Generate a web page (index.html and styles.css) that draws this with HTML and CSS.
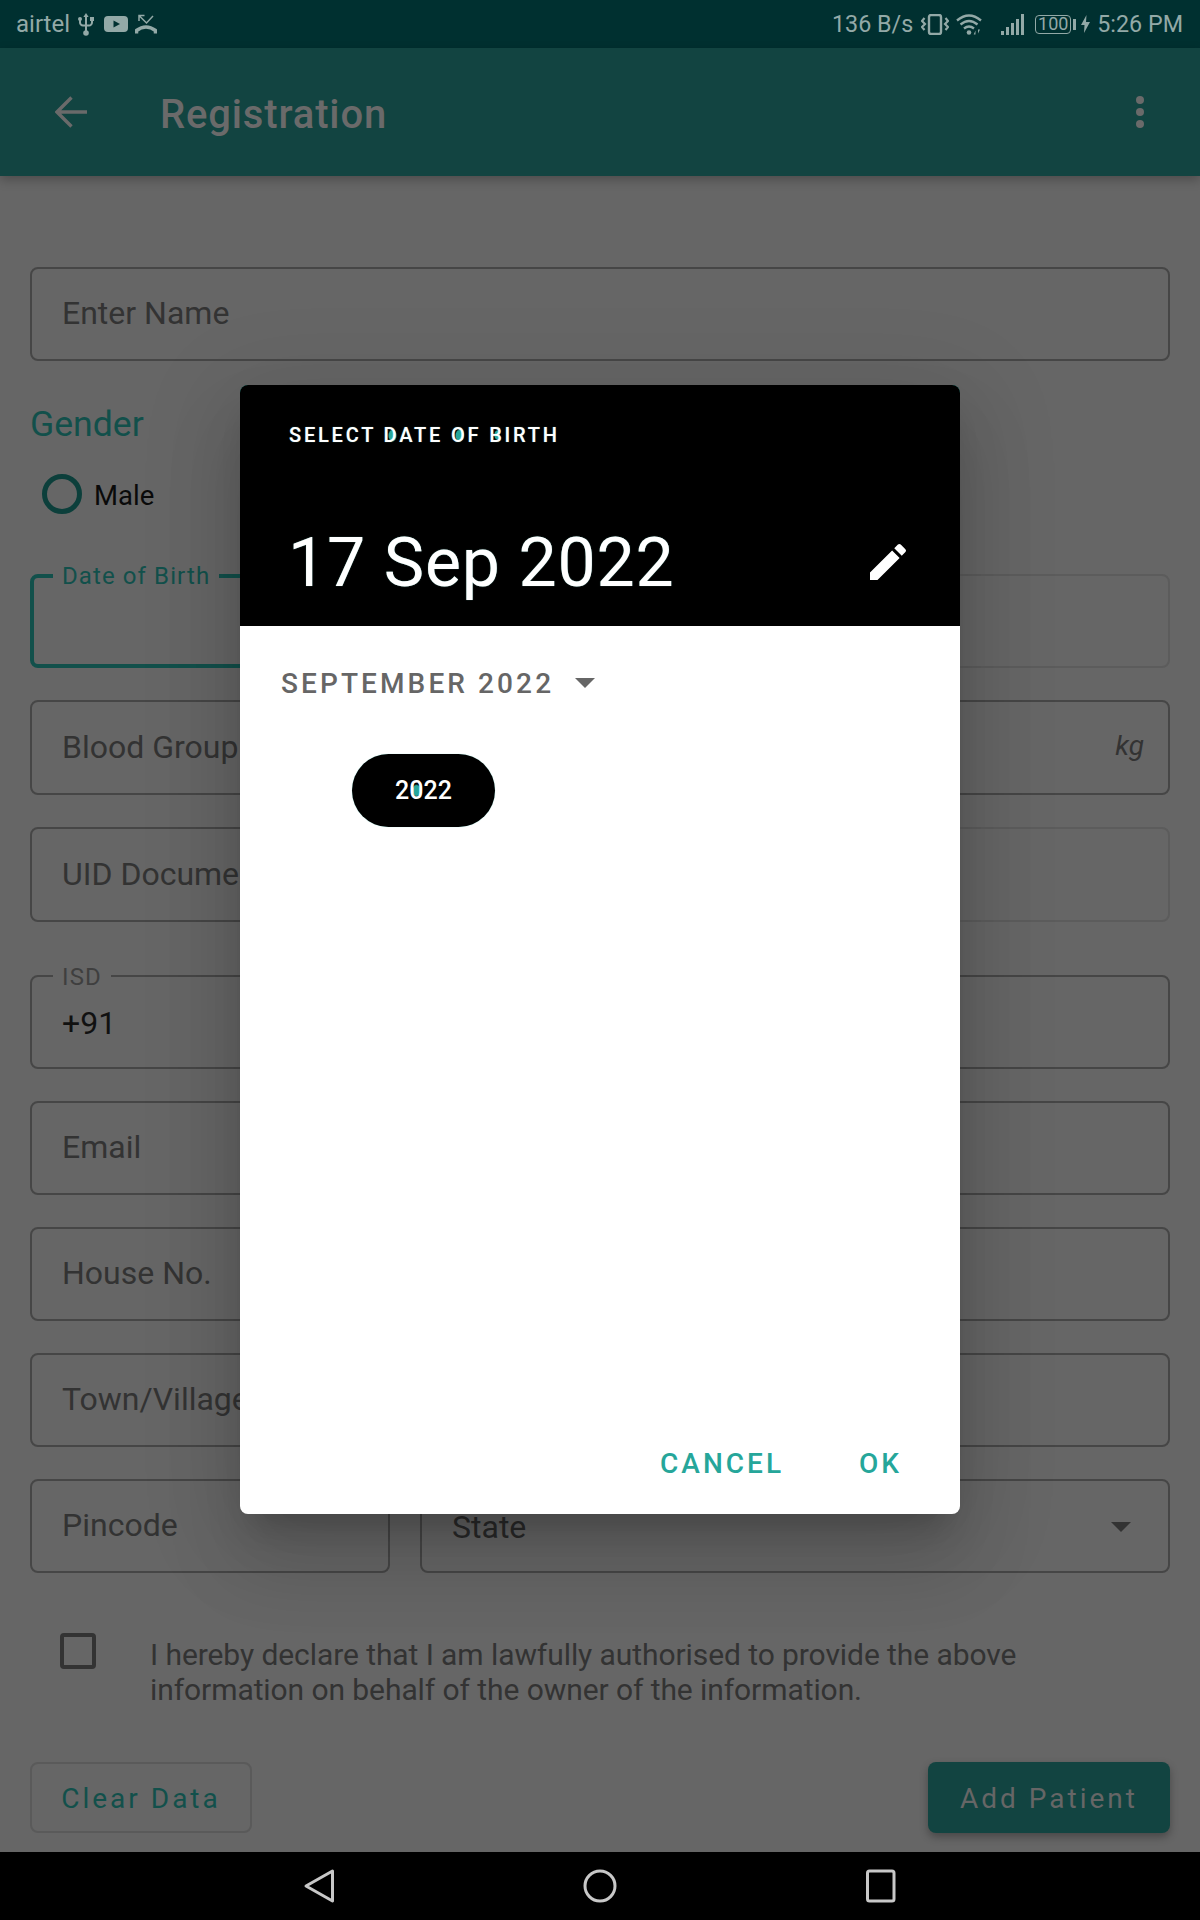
FILE: index.html
```html
<!DOCTYPE html>
<html lang="en">
<head>
    <meta charset="UTF-8">
    <meta name="viewport" content="width=device-width, initial-scale=1.0">
    <title>Registration</title>
    <link rel="stylesheet" href="styles.css">
</head>
<body>

<div class="screen">

    <div class="status-bar">
        <div class="status-left">
            <span class="carrier">airtel</span>
            <svg class="icon-usb" width="16" height="23" viewBox="0 0 16 23"><path d="M8 0l2.6 4H5.4z"/><path d="M8 3v17M2 7v2.5a3 3 0 0 0 3 3h6a3 3 0 0 0 3-3V7" fill="none" stroke="#93a9a7" stroke-width="2"/><circle cx="8" cy="20" r="2.8"/><circle cx="2" cy="6" r="2"/><rect x="12" y="4" width="4" height="4"/></svg>
            <svg class="icon-yt" width="24" height="16" viewBox="0 0 24 16"><rect width="24" height="16" rx="4"/><path d="M9.5 4.5l6.5 3.5-6.5 3.5z" fill="#003030"/></svg>
            <svg class="icon-missed" width="22" height="20" viewBox="0 0 22 20"><path d="M4 7V1.500h5.500M4 1.500l7.500 7.500L18 2" fill="none" stroke="#93a9a7" stroke-width="1.500"/><path d="M1.500 19.500v-3q9.500-7 19 0v3" fill="none" stroke="#93a9a7" stroke-width="3.500"/></svg>
        </div>
        <div class="status-right">
            <span class="speed">136 B/s</span>
            <svg class="icon-vibrate" width="28" height="21" viewBox="0 0 28 21"><rect x="8" y="1" width="12" height="19" rx="2" fill="none" stroke="#93a9a7" stroke-width="2.400"/><path d="M3.500 4L1 7l3 3-3 3 2.500 3M24.500 4L27 7l-3 3 3 3-2.500 3" fill="none" stroke="#93a9a7" stroke-width="2.200"/></svg>
            <svg class="icon-wifi" width="26" height="21" viewBox="0 0 26 21"><path d="M1 6.500q12-10 24 0M4.500 10.500q8.500-7 17 0M8 14.500q5-4 10 0" fill="none" stroke="#93a9a7" stroke-width="2.300"/><circle cx="13" cy="18.500" r="2.300"/><path d="M19.500 20.500v-4l-1.800 4zM22 15.500v4l2-4z"/></svg>
            <svg class="icon-signal" width="23" height="21" viewBox="0 0 23 21"><rect y="17" width="3" height="4"/><rect x="5" y="13" width="3" height="8"/><rect x="10" y="9" width="3" height="12"/><rect x="15" y="5" width="3" height="16"/><rect x="20" y="0" width="3" height="21"/></svg>
            <span class="battery">100</span>
            <span class="battery-nub"></span>
            <svg class="icon-bolt" width="9" height="18" viewBox="0 0 9 18"><path d="M5.500 0L0 10h3.500L3 18l6-11H5z"/></svg>
            <span class="clock">5:26 PM</span>
        </div>
    </div>

    <div class="app-bar">
        <svg class="back-icon" width="32" height="32" viewBox="0 0 32 32"><path d="M32 16H2M16.500 1.500L2 16l14.500 14.500" fill="none" stroke="#6a6a6a" stroke-width="3.400"/></svg>
        <div class="app-title">Registration</div>
        <div class="menu-dots"><span></span><span></span><span></span></div>
    </div>

    <div class="content">
        <div class="field"><span class="placeholder">Enter Name</span></div>

        <div class="section-label">Gender</div>
        <div class="radio-row">
            <span class="radio"></span>
            <span class="radio-text">Male</span>
        </div>

        <div class="form-row first">
            <div class="field focused"><span class="float-label teal">Date of Birth</span></div>
            <div class="field faint"></div>
        </div>
        <div class="form-row tall">
            <div class="field"><span class="placeholder">Blood Group</span></div>
            <div class="field end"><span class="unit">kg</span></div>
        </div>
        <div class="form-row tall">
            <div class="field"><span class="placeholder">UID Document</span></div>
            <div class="field faint"></div>
        </div>
        <div class="form-row isd">
            <div class="field"><span class="float-label">ISD</span><span class="value">+91</span></div>
            <div class="field"></div>
        </div>
        <div class="form-row">
            <div class="field"><span class="placeholder">Email</span></div>
            <div class="field"></div>
        </div>
        <div class="form-row">
            <div class="field"><span class="placeholder">House No.</span></div>
            <div class="field"></div>
        </div>
        <div class="form-row">
            <div class="field"><span class="placeholder">Town/Village</span></div>
            <div class="field"></div>
        </div>
        <div class="form-row">
            <div class="field"><span class="placeholder">Pincode</span></div>
            <div class="field select"><span class="placeholder state">State</span><span class="caret dark"></span></div>
        </div>

        <div class="declare">
            <span class="checkbox"></span>
            <p>I hereby declare that I am lawfully authorised to provide the above<br>information on behalf of the owner of the information.</p>
        </div>

        <div class="actions">
            <div class="btn-outline">Clear Data</div>
            <div class="btn-solid">Add Patient</div>
        </div>
    </div>

    <div class="nav-bar">
        <svg width="32" height="36" viewBox="0 0 32 36"><path d="M30.500 3L4 18l26.500 15z" fill="none" stroke="#c8c8c8" stroke-width="3" stroke-linejoin="round"/></svg>
        <svg width="34" height="34" viewBox="0 0 34 34"><circle cx="17" cy="17" r="15" fill="none" stroke="#c8c8c8" stroke-width="3"/></svg>
        <svg width="32" height="34" viewBox="0 0 32 34"><rect x="1.500" y="2" width="26.500" height="30" rx="2" fill="none" stroke="#c8c8c8" stroke-width="3"/></svg>
    </div>

    <div class="date-dialog">
        <div class="dialog-head">
            <div class="overline">SELECT <i class="ink d">D</i>ATE <i class="ink">O</i>F <i class="ink b">B</i>IRTH</div>
            <div class="date-row">
                <span class="big-date">17 Sep 2022</span>
                <svg width="48" height="48" viewBox="0 0 24 24"><path fill="#fff" d="M3 17.250V21h3.750L17.810 9.940l-3.750-3.750L3 17.250zM20.710 7.040a1 1 0 0 0 0-1.410l-2.340-2.340a1 1 0 0 0-1.410 0l-1.830 1.830 3.750 3.750 1.830-1.830z"/></svg>
            </div>
        </div>
        <div class="dialog-body">
            <div class="month-row">
                <span class="month">SEPTEMBER 2022</span>
                <span class="caret"></span>
            </div>
            <div class="year-pill">2<i class="ink">0</i>22</div>
        </div>
        <div class="dialog-foot">
            <span class="text-btn">CANCEL</span>
            <span class="text-btn">OK</span>
        </div>
    </div>

</div>

</body>
</html>
```

FILE: styles.css
```css
* {
    box-sizing: border-box;
}

body {
    margin: 0;
    font-family: Roboto, "Liberation Sans", sans-serif;
    background-color: #000;
}

.screen {
    position: relative;
    width: 1200px;
    height: 1920px;
    display: flex;
    flex-direction: column;
    overflow: hidden;
    background-color: #666;
}

/* status bar */
.status-bar {
    height: 48px;
    flex-shrink: 0;
    display: flex;
    justify-content: space-between;
    align-items: center;
    padding: 0 17px 0 16px;
    background-color: #003030;
    color: #93a9a7;
    font-size: 24px;
    fill: #93a9a7;
}

.status-left,
.status-right {
    display: flex;
    align-items: center;
}

.speed,
.clock {
    font-size: 23.3px;
}

.icon-usb {
    margin-left: 8px;
}

.icon-yt {
    margin-left: 10px;
}

.icon-missed {
    margin-left: 7px;
}

.icon-vibrate {
    margin-left: 8px;
}

.icon-wifi {
    margin-left: 7px;
}

.icon-signal {
    margin-left: 19px;
}

.battery {
    width: 36px;
    height: 19px;
    margin-left: 11px;
    border: 1.5px solid #93a9a7;
    border-radius: 4px;
    font-size: 18px;
    line-height: 16px;
    text-align: center;
}

.battery-nub {
    width: 3px;
    height: 11px;
    margin-left: 2px;
    background-color: #93a9a7;
}

.icon-bolt {
    margin-left: 5px;
}

.clock {
    margin-left: 7px;
}

/* app bar */
.app-bar {
    height: 128px;
    flex-shrink: 0;
    display: flex;
    align-items: center;
    padding: 0 55px;
    background-color: #124441;
    box-shadow: 0 4px 10px rgba(0, 0, 0, 0.25);
    position: relative;
}

.app-title {
    margin-left: 73px;
    padding-top: 4px;
    font-size: 40px;
    font-weight: 500;
    letter-spacing: 0.85px;
    color: #6a6a6a;
}

.menu-dots {
    margin-left: auto;
    margin-right: 1px;
    display: flex;
    flex-direction: column;
    gap: 4px;
}

.menu-dots span {
    width: 8px;
    height: 8px;
    border-radius: 50%;
    background-color: #6a6a6a;
}

/* form */
.content {
    flex: 1;
    padding: 91px 30px 0;
}

.field {
    position: relative;
    height: 94px;
    display: flex;
    align-items: center;
    padding: 0 30px 2px;
    border: 2px solid #464646;
    border-radius: 8px;
}

.field.focused {
    border: 4px solid #12504b;
}

.field.faint {
    border-color: #5c5c5c;
}

.field.end {
    justify-content: flex-end;
    padding-right: 24px;
    padding-bottom: 5px;
}

.field.select {
    justify-content: space-between;
    padding-right: 37px;
}

.placeholder {
    font-size: 32px;
    color: #333;
    white-space: nowrap;
}

.placeholder.state {
    margin-top: 4px;
    color: #2a2a2a;
}

.value {
    margin-top: 3px;
    font-size: 32px;
    color: #111;
}

.unit {
    font-size: 28px;
    font-style: italic;
    color: #333;
}

.float-label {
    position: absolute;
    top: -14px;
    left: 21px;
    padding: 0 9px;
    background-color: #666;
    font-size: 24px;
    line-height: 28px;
    letter-spacing: 1.1px;
    color: #3f3f3f;
}

.field.focused .float-label {
    left: 19px;
    top: -16px;
}

.teal {
    color: #12504b;
}

.section-label {
    margin-top: 43px;
    font-size: 35.6px;
    line-height: 40px;
    color: #12504b;
}

.radio-row {
    display: flex;
    align-items: center;
    margin: 30px 0 0 12px;
}

.radio {
    width: 40px;
    height: 40px;
    border: 5px solid #0c3f3b;
    border-radius: 50%;
}

.radio-text {
    margin-left: 12px;
    padding-top: 2px;
    font-size: 27.5px;
    color: #0a0a0a;
}

.form-row {
    display: grid;
    grid-template-columns: 360px 1fr;
    gap: 30px;
    margin-top: 32px;
}

.form-row.first {
    margin-top: 60px;
}

.form-row.tall .field {
    height: 95px;
}

.form-row.isd {
    margin-top: 53px;
}

.caret {
    width: 0;
    height: 0;
    border-left: 10px solid transparent;
    border-right: 10px solid transparent;
    border-top: 10px solid #666;
}

.caret.dark {
    margin-top: 3px;
    border-top-color: #333;
}

.declare {
    display: flex;
    margin: 60px 0 0 30px;
}

.checkbox {
    width: 36px;
    height: 36px;
    flex-shrink: 0;
    border: 4px solid #333;
    border-radius: 4px;
}

.declare p {
    margin: 4px 0 0 54px;
    font-size: 30px;
    line-height: 35px;
    letter-spacing: -0.08px;
    color: #333;
}

.actions {
    display: flex;
    justify-content: space-between;
    margin-top: 55px;
}

.btn-outline,
.btn-solid {
    height: 71px;
    display: flex;
    align-items: center;
    justify-content: center;
    padding-top: 2px;
    border-radius: 8px;
    font-size: 28px;
    letter-spacing: 3px;
}

.btn-outline {
    width: 222px;
    border: 2px solid #5a5a5a;
    color: #12504b;
}

.btn-solid {
    width: 242px;
    background-color: #124441;
    color: #666;
    box-shadow: 0 4px 8px rgba(0, 0, 0, 0.3);
}

/* nav bar */
.nav-bar {
    height: 68px;
    flex-shrink: 0;
    display: flex;
    justify-content: center;
    align-items: center;
    gap: 249px;
    background-color: #000;
}

/* date picker */
.date-dialog {
    position: absolute;
    top: 385px;
    left: 240px;
    width: 720px;
    height: 1129px;
    display: flex;
    flex-direction: column;
    border-radius: 8px;
    background: linear-gradient(#26a69a 20px, #fff 20px);
    box-shadow: 0 22px 30px -14px rgba(0, 0, 0, 0.2), 0 48px 76px 6px rgba(0, 0, 0, 0.1), 0 18px 92px 16px rgba(0, 0, 0, 0.1);
}

.dialog-head {
    height: 241px;
    padding: 38px 48px 0;
    border-radius: 8px 8px 0 0;
    background-color: #000;
    color: #fff;
    text-shadow: 0 0 1px rgba(120, 220, 210, 0.7);
}

.overline {
    margin-left: 1px;
    font-size: 20px;
    line-height: 24px;
    font-weight: 500;
    letter-spacing: 2.8px;
}

.ink {
    font-style: normal;
    background: radial-gradient(ellipse closest-side, #26a69a 75%, transparent 100%) no-repeat center / 9px 13px;
}

.ink.d {
    background-position: 4px center;
}

.ink.b {
    background-size: 6px 10px;
    background-position: 5px center;
}

.date-row {
    display: flex;
    justify-content: space-between;
    align-items: center;
    margin-top: 76px;
    height: 80px;
}

.date-row svg {
    margin-top: -2px;
}

.big-date {
    font-size: 68px;
    line-height: 80px;
    letter-spacing: 0.8px;
}

.dialog-body {
    flex: 1;
    padding: 37px 41px 0;
}

.month-row {
    display: flex;
    align-items: center;
    height: 40px;
}

.month {
    font-size: 28px;
    font-weight: 500;
    letter-spacing: 3.1px;
    color: #666;
}

.month-row .caret {
    margin-left: 21px;
}

.year-pill {
    width: 143px;
    height: 73px;
    margin: 51px 0 0 71px;
    border-radius: 37px;
    background-color: #000;
    box-shadow: 0 0 1px #8fe3da;
    color: #fff;
    font-size: 25px;
    font-weight: 500;
    line-height: 73px;
    text-align: center;
}

.dialog-foot {
    display: flex;
    justify-content: flex-end;
    gap: 75px;
    padding: 0 58px 34px 0;
}

.text-btn {
    font-size: 28px;
    font-weight: 500;
    line-height: 32px;
    letter-spacing: 3px;
    color: #26a69a;
}
```
